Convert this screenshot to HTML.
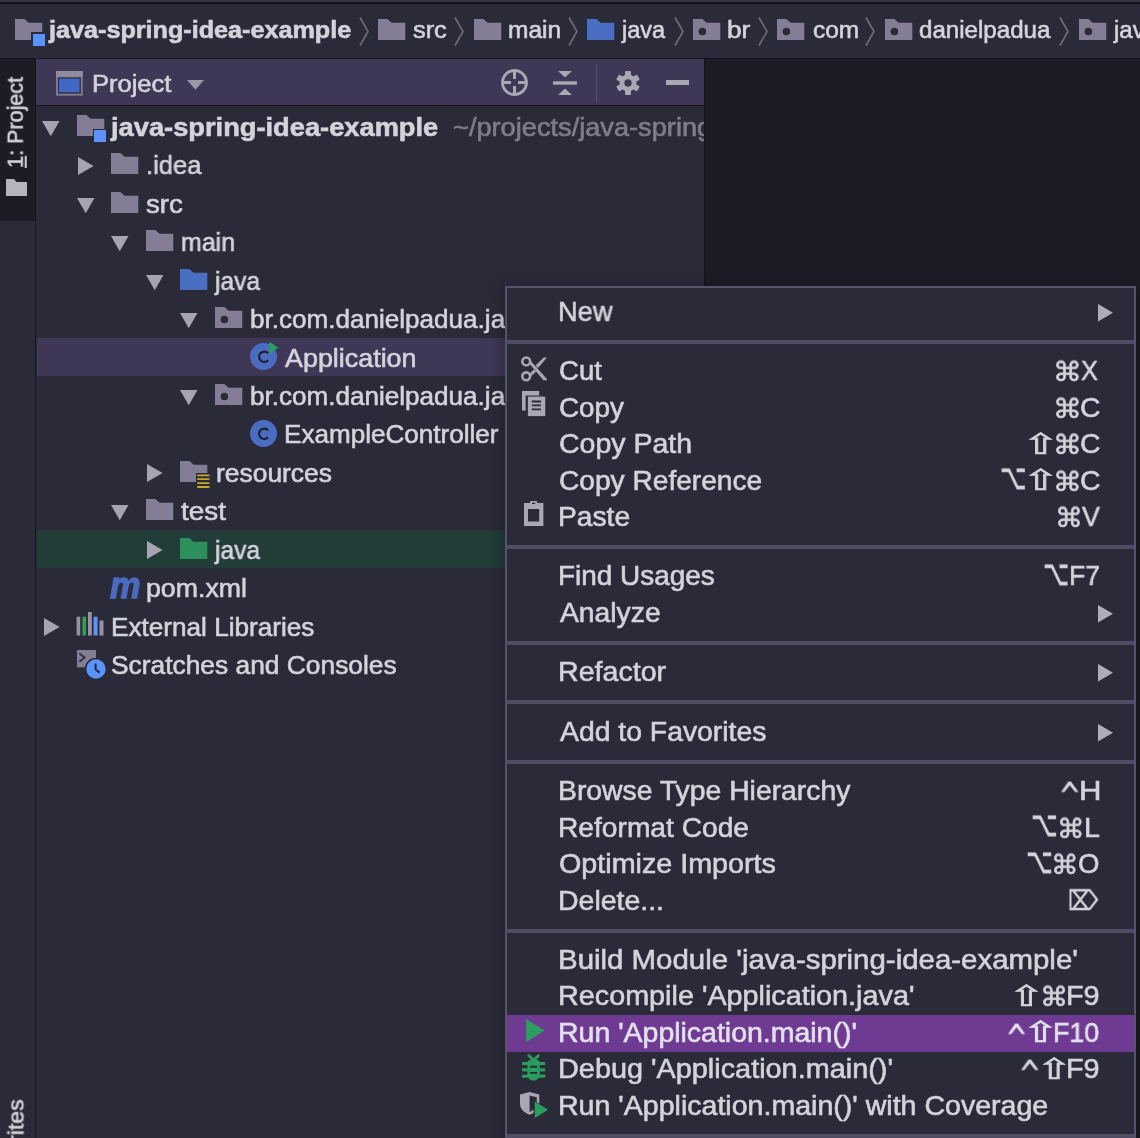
<!DOCTYPE html>
<html lang="en"><head><meta charset="utf-8"><title>IntelliJ IDEA - java-spring-idea-example</title>
<style>
*{margin:0;padding:0;box-sizing:border-box}
html,body{width:1140px;height:1138px;overflow:hidden;background:#2b2a39;}
body{position:relative;font-family:"Liberation Sans",sans-serif;font-size:26px;color:#d4d3dc;}
.a{position:absolute}
.t{position:absolute;white-space:nowrap;line-height:30px;height:30px;transform-origin:0 50%;-webkit-text-stroke:0.6px currentColor;will-change:transform}
.b{font-weight:bold}
.i{font-style:italic}
.m{-webkit-text-stroke:1.3px currentColor}
.k{font-family:"DejaVu Sans","Liberation Sans",sans-serif}
svg{position:absolute;overflow:visible}
#tree{position:absolute;left:37px;top:106px;width:667px;height:1032px;overflow:hidden}
#tree>*{margin-left:-37px;margin-top:-106px}
#crumbs{position:absolute;left:0;top:4px;width:1140px;height:54px;overflow:hidden}
#crumbs>*{margin-top:-4px}
</style></head>
<body>
<div class="a" style="left:0px;top:0px;width:1140px;height:2.3px;background:#363545;"></div>
<div class="a" style="left:0px;top:2.3px;width:1140px;height:1.5px;background:#14131a;"></div>
<div class="a" style="left:0px;top:57.5px;width:1140px;height:1.5px;background:#17161d;"></div>
<div id="crumbs">
<svg style="left:15px;top:19.3px" width="27.3" height="21.1" viewBox="0 0 27.3 21.1"><path d="M0 0H9.4L13.6 3.7H27.3V21.1H0Z" fill="#837e96"/></svg>
<div class="a" style="left:31px;top:32px;width:14px;height:14px;background:#2b2a39;"></div>
<div class="a" style="left:32.5px;top:33.5px;width:12px;height:12px;background:#5a93fb;"></div>
<div class="t b" style="left:49.39px;top:15.4px;transform:scaleX(1.0714);font-size:23.5px;">java-spring-idea-example</div>
<svg style="left:358.5px;top:17px" width="10" height="29" viewBox="0 0 10 29"><path d="M1 0.5L9 14.5L1 28.5" fill="none" stroke="#6f6c80" stroke-width="1.6"/></svg>
<svg style="left:378px;top:19.3px" width="27.3" height="21.1" viewBox="0 0 27.3 21.1"><path d="M0 0H9.4L13.6 3.7H27.3V21.1H0Z" fill="#837e96"/></svg>
<div class="t " style="left:412.6px;top:15.4px;transform:scaleX(1.0787);font-size:23.5px;">src</div>
<svg style="left:453.5px;top:17px" width="10" height="29" viewBox="0 0 10 29"><path d="M1 0.5L9 14.5L1 28.5" fill="none" stroke="#6f6c80" stroke-width="1.6"/></svg>
<svg style="left:474px;top:19.3px" width="27.3" height="21.1" viewBox="0 0 27.3 21.1"><path d="M0 0H9.4L13.6 3.7H27.3V21.1H0Z" fill="#837e96"/></svg>
<div class="t " style="left:507.97px;top:15.4px;transform:scaleX(1.0447);font-size:23.5px;">main</div>
<svg style="left:567.5px;top:17px" width="10" height="29" viewBox="0 0 10 29"><path d="M1 0.5L9 14.5L1 28.5" fill="none" stroke="#6f6c80" stroke-width="1.6"/></svg>
<svg style="left:587px;top:19.3px" width="27.3" height="21.1" viewBox="0 0 27.3 21.1"><path d="M0 0H9.4L13.6 3.7H27.3V21.1H0Z" fill="#4a6ec2"/></svg>
<div class="t " style="left:621.73px;top:15.4px;transform:scaleX(1.0001);font-size:23.5px;">java</div>
<svg style="left:673.5px;top:17px" width="10" height="29" viewBox="0 0 10 29"><path d="M1 0.5L9 14.5L1 28.5" fill="none" stroke="#6f6c80" stroke-width="1.6"/></svg>
<svg style="left:693px;top:19.3px" width="27.3" height="21.1" viewBox="0 0 27.3 21.1"><path d="M0 0H9.4L13.6 3.7H27.3V21.1H0Z" fill="#837e96"/><circle cx="9.4" cy="12.5" r="3.8" fill="#2b2a39"/></svg>
<div class="t " style="left:726.86px;top:15.4px;transform:scaleX(1.1133);font-size:23.5px;">br</div>
<svg style="left:757.5px;top:17px" width="10" height="29" viewBox="0 0 10 29"><path d="M1 0.5L9 14.5L1 28.5" fill="none" stroke="#6f6c80" stroke-width="1.6"/></svg>
<svg style="left:777px;top:19.3px" width="27.3" height="21.1" viewBox="0 0 27.3 21.1"><path d="M0 0H9.4L13.6 3.7H27.3V21.1H0Z" fill="#837e96"/><circle cx="9.4" cy="12.5" r="3.8" fill="#2b2a39"/></svg>
<div class="t " style="left:812.54px;top:15.4px;transform:scaleX(1.0414);font-size:23.5px;">com</div>
<svg style="left:864.5px;top:17px" width="10" height="29" viewBox="0 0 10 29"><path d="M1 0.5L9 14.5L1 28.5" fill="none" stroke="#6f6c80" stroke-width="1.6"/></svg>
<svg style="left:885px;top:19.3px" width="27.3" height="21.1" viewBox="0 0 27.3 21.1"><path d="M0 0H9.4L13.6 3.7H27.3V21.1H0Z" fill="#837e96"/><circle cx="9.4" cy="12.5" r="3.8" fill="#2b2a39"/></svg>
<div class="t " style="left:919.45px;top:15.4px;transform:scaleX(1.0260);font-size:23.5px;">danielpadua</div>
<svg style="left:1058.5px;top:17px" width="10" height="29" viewBox="0 0 10 29"><path d="M1 0.5L9 14.5L1 28.5" fill="none" stroke="#6f6c80" stroke-width="1.6"/></svg>
<svg style="left:1079px;top:19.3px" width="27.3" height="21.1" viewBox="0 0 27.3 21.1"><path d="M0 0H9.4L13.6 3.7H27.3V21.1H0Z" fill="#837e96"/><circle cx="9.4" cy="12.5" r="3.8" fill="#2b2a39"/></svg>
<div class="t " style="left:1114.25px;top:15.4px;transform:scaleX(1.0229);font-size:23.5px;">java</div>
</div>
<div class="a" style="left:0px;top:59px;width:36px;height:161.5px;background:#1d1c26;"></div>
<div class="a" style="left:0px;top:220.5px;width:36px;height:920px;background:#2b2a39;"></div>
<div class="a" style="left:35.2px;top:59px;width:1.2px;height:1080px;background:#17161d;"></div>
<div class="a" style="left:23.6px;top:166.7px;width:0;height:0"><div class="t" style="left:-1.35px;top:-22.62px;transform-origin:1.35px 22.62px;transform:rotate(-90deg) scaleX(0.9800);font-size:22px"><u>1</u>: Project</div></div>
<div class="a" style="left:23.6px;top:1219px;width:0;height:0"><div class="t" style="left:-1.08px;top:-22.62px;transform-origin:1.08px 22.62px;transform:rotate(-90deg) scaleX(1.0476);font-size:22px">2: Favorites</div></div>
<svg style="left:6px;top:179px" width="21" height="17" viewBox="0 0 21 17"><path d="M0 0H8L10.5 3H21V17H0Z" fill="#b5b3bd"/></svg>
<div class="a" style="left:705px;top:59px;width:435px;height:1080px;background:#1d1c26;"></div>
<div class="a" style="left:704px;top:59px;width:1.5px;height:1080px;background:#17161d;"></div>
<div class="a" style="left:36.3px;top:59px;width:667.7px;height:46.2px;background:#3e3755;"></div>
<div class="a" style="left:36.3px;top:105.2px;width:667.7px;height:1.1px;background:#17161d;"></div>
<svg style="left:55.8px;top:71px" width="26.8" height="24.7" viewBox="0 0 26.8 24.7"><rect x="0" y="0" width="26.8" height="24.7" fill="#7d7a8e"/><rect x="0" y="0" width="26.8" height="5.8" fill="#8f8c9e"/><rect x="2" y="6.4" width="22.8" height="16.2" fill="#2c2a3a"/><rect x="3" y="7.6" width="20.6" height="13.7" fill="#4168c4"/></svg>
<div class="t " style="left:91.51px;top:69px;transform:scaleX(1.0857);font-size:23.5px;">Project</div>
<svg style="left:187.2px;top:80px" width="17" height="9.8" viewBox="0 0 17 9.8"><path d="M0 0H17L8.5 9.8Z" fill="#9a97a6"/></svg>
<svg style="left:501px;top:69px" width="27" height="27" viewBox="0 0 27 27"><circle cx="13.5" cy="13.5" r="12" fill="none" stroke="#aaa8b4" stroke-width="2.8"/><path d="M13.5 1V10M13.5 17V26M1 13.5H10M17 13.5H26" stroke="#aaa8b4" stroke-width="3"/></svg>
<svg style="left:552.5px;top:70.5px" width="24" height="24" viewBox="0 0 24 24"><path d="M0 12H24" stroke="#aaa8b4" stroke-width="3.4"/><path d="M5 0H19L12 6.5Z M5 24H19L12 17.5Z" fill="#aaa8b4"/></svg>
<div class="a" style="left:595.5px;top:63.5px;width:1.5px;height:38px;background:#57536a;"></div>
<svg style="left:614.5px;top:69.5px" width="26" height="26" viewBox="0 0 26 26"><g transform="translate(13 13) scale(0.92)" fill="#aaa8b4"><rect x="-3.2" y="-13" width="6.4" height="7" rx="1" transform="rotate(0)"/><rect x="-3.2" y="-13" width="6.4" height="7" rx="1" transform="rotate(60)"/><rect x="-3.2" y="-13" width="6.4" height="7" rx="1" transform="rotate(120)"/><rect x="-3.2" y="-13" width="6.4" height="7" rx="1" transform="rotate(180)"/><rect x="-3.2" y="-13" width="6.4" height="7" rx="1" transform="rotate(240)"/><rect x="-3.2" y="-13" width="6.4" height="7" rx="1" transform="rotate(300)"/><circle r="9.2"/><circle r="4" fill="#3e3755"/></g></svg>
<div class="a" style="left:665.8px;top:80.3px;width:23.3px;height:4.3px;background:#aaa8b4;"></div>
<div id="tree">
<div class="a" style="left:37px;top:337.90000000000003px;width:469px;height:37.8px;background:#3e3756;"></div>
<div class="a" style="left:37px;top:530.0px;width:469px;height:37.8px;background:#223c38;"></div>
<svg style="left:42.3px;top:120.8px" width="17.5" height="15.2" viewBox="0 0 17.5 15.2"><path d="M0 0H17.5L8.75 15.2Z" fill="#a6a4b0"/></svg>
<svg style="left:76.8px;top:114.9px" width="27.3" height="21.1" viewBox="0 0 27.3 21.1"><path d="M0 0H9.4L13.6 3.7H27.3V21.1H0Z" fill="#837e96"/></svg>
<div class="a" style="left:92.8px;top:128.8px;width:14.5px;height:14.5px;background:#2b2a39;"></div>
<div class="a" style="left:94.3px;top:130.3px;width:12px;height:11.6px;background:#5a93fb;"></div>
<div class="t b" style="left:111.43px;top:112px;transform:scaleX(1.0485);">java-spring-idea-example</div>
<div class="t " style="left:452.65px;top:112px;transform:scaleX(1.0457);color:#7f7d8c;">~/projects/java-spring-idea-example</div>
<svg style="left:78.3px;top:156.6px" width="15.6" height="18" viewBox="0 0 15.6 18"><path d="M0 0L15.6 9L0 18Z" fill="#a6a4b0"/></svg>
<svg style="left:111.3px;top:153.3px" width="27.3" height="21.1" viewBox="0 0 27.3 21.1"><path d="M0 0H9.4L13.6 3.7H27.3V21.1H0Z" fill="#837e96"/></svg>
<div class="t " style="left:146.01px;top:150.4px;transform:scaleX(0.9814);">.idea</div>
<svg style="left:76.8px;top:197.7px" width="17.5" height="15.2" viewBox="0 0 17.5 15.2"><path d="M0 0H17.5L8.75 15.2Z" fill="#a6a4b0"/></svg>
<svg style="left:111.3px;top:191.8px" width="27.3" height="21.1" viewBox="0 0 27.3 21.1"><path d="M0 0H9.4L13.6 3.7H27.3V21.1H0Z" fill="#837e96"/></svg>
<div class="t " style="left:145.87px;top:188.9px;transform:scaleX(1.0637);">src</div>
<svg style="left:111.3px;top:236.1px" width="17.5" height="15.2" viewBox="0 0 17.5 15.2"><path d="M0 0H17.5L8.75 15.2Z" fill="#a6a4b0"/></svg>
<svg style="left:145.8px;top:230.2px" width="27.3" height="21.1" viewBox="0 0 27.3 21.1"><path d="M0 0H9.4L13.6 3.7H27.3V21.1H0Z" fill="#837e96"/></svg>
<div class="t " style="left:181.14px;top:227.3px;transform:scaleX(0.9593);">main</div>
<svg style="left:145.8px;top:274.5px" width="17.5" height="15.2" viewBox="0 0 17.5 15.2"><path d="M0 0H17.5L8.75 15.2Z" fill="#a6a4b0"/></svg>
<svg style="left:180.3px;top:268.6px" width="27.3" height="21.1" viewBox="0 0 27.3 21.1"><path d="M0 0H9.4L13.6 3.7H27.3V21.1H0Z" fill="#4a6ec2"/></svg>
<div class="t " style="left:215.27px;top:265.7px;transform:scaleX(0.9451);">java</div>
<svg style="left:180.3px;top:313px" width="17.5" height="15.2" viewBox="0 0 17.5 15.2"><path d="M0 0H17.5L8.75 15.2Z" fill="#a6a4b0"/></svg>
<svg style="left:214.8px;top:307.1px" width="27.3" height="21.1" viewBox="0 0 27.3 21.1"><path d="M0 0H9.4L13.6 3.7H27.3V21.1H0Z" fill="#837e96"/><circle cx="9.4" cy="12.5" r="3.8" fill="#2b2a39"/></svg>
<div class="t " style="left:249.97px;top:304.2px;transform:scaleX(1.0030);">br.com.danielpadua.java.spring.idea.example</div>
<svg style="left:249.6px;top:343.3px" width="27" height="27" viewBox="0 0 27 27"><circle cx="13.5" cy="13.5" r="13.5" fill="#4a6dc2"/><path d="M18.1 10.3A5.2 5.2 0 1 0 18.1 17.3" fill="none" stroke="#1f1e2a" stroke-width="2.1"/><path d="M19.3 -1.3L28.4 4.7L19.3 10.7Z" fill="#27a05f"/></svg>
<div class="t " style="left:285px;top:342.6px;transform:scaleX(1.0339);">Application</div>
<svg style="left:180.3px;top:389.8px" width="17.5" height="15.2" viewBox="0 0 17.5 15.2"><path d="M0 0H17.5L8.75 15.2Z" fill="#a6a4b0"/></svg>
<svg style="left:214.8px;top:383.9px" width="27.3" height="21.1" viewBox="0 0 27.3 21.1"><path d="M0 0H9.4L13.6 3.7H27.3V21.1H0Z" fill="#837e96"/><circle cx="9.4" cy="12.5" r="3.8" fill="#2b2a39"/></svg>
<div class="t " style="left:249.97px;top:381px;transform:scaleX(1.0030);">br.com.danielpadua.java.spring.idea.example</div>
<svg style="left:249.6px;top:420.1px" width="27" height="27" viewBox="0 0 27 27"><circle cx="13.5" cy="13.5" r="13.5" fill="#4a6dc2"/><path d="M18.1 10.3A5.2 5.2 0 1 0 18.1 17.3" fill="none" stroke="#1f1e2a" stroke-width="2.1"/></svg>
<div class="t " style="left:284.16px;top:419.4px;transform:scaleX(1.0028);">ExampleController</div>
<svg style="left:147.3px;top:464.1px" width="15.6" height="18" viewBox="0 0 15.6 18"><path d="M0 0L15.6 9L0 18Z" fill="#a6a4b0"/></svg>
<svg style="left:180.3px;top:460.8px" width="27.3" height="21.1" viewBox="0 0 27.3 21.1"><path d="M0 0H9.4L13.6 3.7H27.3V21.1H0Z" fill="#837e96"/></svg>
<svg style="left:196px;top:472.5px" width="14" height="16" viewBox="0 0 14 16"><rect x="0" y="0" width="14" height="16" fill="#2b2a39"/><path d="M1.2 2.4H13.4M1.2 6.2H13.4M1.2 10.2H13.4M1.2 14H13.4" stroke="#c4a62f" stroke-width="1.8"/></svg>
<div class="t " style="left:215.85px;top:457.9px;transform:scaleX(1.0159);">resources</div>
<svg style="left:111.3px;top:505.1px" width="17.5" height="15.2" viewBox="0 0 17.5 15.2"><path d="M0 0H17.5L8.75 15.2Z" fill="#a6a4b0"/></svg>
<svg style="left:145.8px;top:499.2px" width="27.3" height="21.1" viewBox="0 0 27.3 21.1"><path d="M0 0H9.4L13.6 3.7H27.3V21.1H0Z" fill="#837e96"/></svg>
<div class="t " style="left:181px;top:496.3px;transform:scaleX(1.0715);">test</div>
<svg style="left:147.3px;top:540.9px" width="15.6" height="18" viewBox="0 0 15.6 18"><path d="M0 0L15.6 9L0 18Z" fill="#a6a4b0"/></svg>
<svg style="left:180.3px;top:537.6px" width="27.3" height="21.1" viewBox="0 0 27.3 21.1"><path d="M0 0H9.4L13.6 3.7H27.3V21.1H0Z" fill="#2b905b"/></svg>
<div class="t " style="left:215.27px;top:534.7px;transform:scaleX(0.9451);">java</div>
<div class="t b i m" style="left:109.76px;top:570.6px;transform:scaleX(0.9514);color:#4a6cc0;font-size:36px;">m</div>
<div class="t " style="left:145.83px;top:573.2px;transform:scaleX(1.0274);">pom.xml</div>
<svg style="left:43.8px;top:617.8px" width="15.6" height="18" viewBox="0 0 15.6 18"><path d="M0 0L15.6 9L0 18Z" fill="#a6a4b0"/></svg>
<svg style="left:76.3px;top:612px" width="28" height="24" viewBox="0 0 28 24"><rect x="0.6" y="4.7" width="3.6" height="18.8" fill="#9693a4"/><rect x="6.4" y="4.7" width="3.7" height="18.8" fill="#2f9e5c"/><rect x="12" y="0" width="3.8" height="23.5" fill="#9693a4"/><rect x="17.6" y="4.7" width="4" height="18.8" fill="#5a93fb"/><rect x="23.5" y="8.5" width="4" height="15" fill="#9693a4"/></svg>
<div class="t " style="left:111.46px;top:611.6px;transform:scaleX(1.0052);">External Libraries</div>
<svg style="left:76.9px;top:650.4px" width="30" height="30" viewBox="0 0 30 30"><rect x="0" y="0" width="19" height="17.3" fill="#837e96"/><path d="M2.4 3.4L7.6 7.6L2.4 11.8" stroke="#2b2a39" stroke-width="1.8" fill="none"/><circle cx="19" cy="19" r="11.2" fill="#2b2a39"/><circle cx="19" cy="19" r="9.7" fill="#5a93fb"/><path d="M18.6 13.5V19.6L22.6 22.6" stroke="#2b2a39" stroke-width="2" fill="none"/></svg>
<div class="t " style="left:111.18px;top:650px;transform:scaleX(1.0136);">Scratches and Consoles</div>
</div>
<div class="a" style="left:505px;top:286px;width:631px;height:870px;background:#2b2a39;border:2px solid #57536c;box-shadow:0 3px 14px 2px rgba(0,0,0,0.28)"></div>
<div class="a" style="left:507px;top:339.7px;width:627px;height:4px;background:#514d65;"></div>
<div class="a" style="left:507px;top:544.8px;width:627px;height:4px;background:#514d65;"></div>
<div class="a" style="left:507px;top:640.8px;width:627px;height:4px;background:#514d65;"></div>
<div class="a" style="left:507px;top:700.3px;width:627px;height:4px;background:#514d65;"></div>
<div class="a" style="left:507px;top:759.8px;width:627px;height:4px;background:#514d65;"></div>
<div class="a" style="left:507px;top:928.5px;width:627px;height:4px;background:#514d65;"></div>
<div class="a" style="left:507px;top:1133.5px;width:627px;height:4px;background:#514d65;"></div>
<div class="t " style="left:558.17px;top:296.8px;transform:scaleX(0.9906);font-size:27.5px;">New</div>
<svg style="left:1097.8px;top:303.55px" width="15" height="17.4" viewBox="0 0 15 17.4"><path d="M0 0L15 8.7L0 17.4Z" fill="#aeacb9"/></svg>
<div class="t " style="left:559.01px;top:356.3px;transform:scaleX(1.0024);font-size:27.5px;">Cut</div>
<div class="t k" style="left:1052.54px;top:356.33px;transform-origin:0 24.51px;transform:scale(1.0519,0.9784);font-size:27.5px;">⌘</div>
<div class="t " style="left:1081.2px;top:356.3px;transform:scaleX(0.9196);font-size:27.5px;">X</div>
<div class="t " style="left:558.99px;top:392.7px;transform:scaleX(1.0126);font-size:27.5px;">Copy</div>
<div class="t k" style="left:1052.54px;top:392.73px;transform-origin:0 24.51px;transform:scale(1.0519,0.9784);font-size:27.5px;">⌘</div>
<div class="t " style="left:1079.57px;top:392.7px;transform:scaleX(1.0331);font-size:27.5px;">C</div>
<div class="t " style="left:558.96px;top:429.1px;transform:scaleX(1.0368);font-size:27.5px;">Copy Path</div>
<div class="t k" style="left:1021.93px;top:428.53px;transform-origin:0 24.51px;transform:scale(1.6220,1.0449);font-size:27.5px;">⇧</div>
<div class="t k" style="left:1052.54px;top:429.13px;transform-origin:0 24.51px;transform:scale(1.0519,0.9784);font-size:27.5px;">⌘</div>
<div class="t " style="left:1079.57px;top:429.1px;transform:scaleX(1.0331);font-size:27.5px;">C</div>
<div class="t " style="left:558.98px;top:465.5px;transform:scaleX(1.0223);font-size:27.5px;">Copy Reference</div>
<div class="t k" style="left:1000.38px;top:464.13px;transform-origin:0 24.51px;transform:scale(0.8271,1.2769);font-size:27.5px;">⌥</div>
<div class="t k" style="left:1021.93px;top:464.93px;transform-origin:0 24.51px;transform:scale(1.6220,1.0449);font-size:27.5px;">⇧</div>
<div class="t k" style="left:1052.54px;top:465.53px;transform-origin:0 24.51px;transform:scale(1.0519,0.9784);font-size:27.5px;">⌘</div>
<div class="t " style="left:1079.57px;top:465.5px;transform:scaleX(1.0331);font-size:27.5px;">C</div>
<div class="t " style="left:558.1px;top:501.9px;transform:scaleX(1.0245);font-size:27.5px;">Paste</div>
<div class="t k" style="left:1054.83px;top:501.93px;transform-origin:0 24.51px;transform:scale(1.0193,0.9784);font-size:27.5px;">⌘</div>
<div class="t " style="left:1082px;top:501.9px;transform:scaleX(0.9742);font-size:27.5px;">V</div>
<div class="t " style="left:558.12px;top:561.4px;transform:scaleX(1.0154);font-size:27.5px;">Find Usages</div>
<div class="t k" style="left:1042.79px;top:560.03px;transform-origin:0 24.51px;transform:scale(0.8199,1.2769);font-size:27.5px;">⌥</div>
<div class="t " style="left:1068.92px;top:561.4px;transform:scaleX(0.9678);font-size:27.5px;">F7</div>
<div class="t " style="left:559.5px;top:597.8px;transform:scaleX(1.0287);font-size:27.5px;">Analyze</div>
<svg style="left:1097.8px;top:604.55px" width="15" height="17.4" viewBox="0 0 15 17.4"><path d="M0 0L15 8.7L0 17.4Z" fill="#aeacb9"/></svg>
<div class="t " style="left:558.07px;top:657.3px;transform:scaleX(1.0399);font-size:27.5px;">Refactor</div>
<svg style="left:1097.8px;top:664.05px" width="15" height="17.4" viewBox="0 0 15 17.4"><path d="M0 0L15 8.7L0 17.4Z" fill="#aeacb9"/></svg>
<div class="t " style="left:559.5px;top:716.8px;transform:scaleX(1.0307);font-size:27.5px;">Add to Favorites</div>
<svg style="left:1097.8px;top:723.55px" width="15" height="17.4" viewBox="0 0 15 17.4"><path d="M0 0L15 8.7L0 17.4Z" fill="#aeacb9"/></svg>
<div class="t " style="left:558.09px;top:776.3px;transform:scaleX(1.0304);font-size:27.5px;">Browse Type Hierarchy</div>
<div class="t k" style="left:1059.3px;top:782.05px;transform-origin:0 24.51px;transform:scale(0.9309,1.2929);font-size:27.5px;">^</div>
<div class="t " style="left:1079.07px;top:776.3px;transform:scaleX(1.1313);font-size:27.5px;">H</div>
<div class="t " style="left:558.1px;top:812.7px;transform:scaleX(1.0245);font-size:27.5px;">Reformat Code</div>
<div class="t k" style="left:1030.86px;top:811.33px;transform-origin:0 24.51px;transform:scale(0.8378,1.2769);font-size:27.5px;">⌥</div>
<div class="t k" style="left:1056.88px;top:812.73px;transform-origin:0 24.51px;transform:scale(1.0054,0.9784);font-size:27.5px;">⌘</div>
<div class="t " style="left:1083.76px;top:812.7px;transform:scaleX(1.0433);font-size:27.5px;">L</div>
<div class="t " style="left:558.95px;top:849.1px;transform:scaleX(1.0439);font-size:27.5px;">Optimize Imports</div>
<div class="t k" style="left:1025.55px;top:847.73px;transform-origin:0 24.51px;transform:scale(0.8414,1.2769);font-size:27.5px;">⌥</div>
<div class="t k" style="left:1051.28px;top:849.13px;transform-origin:0 24.51px;transform:scale(1.0054,0.9784);font-size:27.5px;">⌘</div>
<div class="t " style="left:1078.33px;top:849.1px;transform:scaleX(0.9838);font-size:27.5px;">O</div>
<div class="t " style="left:558.08px;top:885.5px;transform:scaleX(1.0350);font-size:27.5px;">Delete...</div>
<div class="t k" style="left:1067.57px;top:885.33px;transform-origin:0 24.51px;transform:scale(0.7758,0.9879);font-size:27.5px;">⌦</div>
<div class="t " style="left:558px;top:945px;transform:scaleX(1.0700);font-size:27.5px;">Build Module 'java-spring-idea-example'</div>
<div class="t " style="left:558.05px;top:981.4px;transform:scaleX(1.0461);font-size:27.5px;">Recompile 'Application.java'</div>
<div class="t k" style="left:1008.42px;top:980.83px;transform-origin:0 24.51px;transform:scale(1.6009,1.0449);font-size:27.5px;">⇧</div>
<div class="t k" style="left:1039.51px;top:981.43px;transform-origin:0 24.51px;transform:scale(1.0287,0.9784);font-size:27.5px;">⌘</div>
<div class="t " style="left:1066.45px;top:981.4px;transform:scaleX(1.0475);font-size:27.5px;">F9</div>
<div class="a" style="left:507px;top:1015.1499999999999px;width:627px;height:36.8px;background:#6e3a92;"></div>
<div class="t " style="left:558.08px;top:1017.8px;transform:scaleX(1.0352);color:#e2e1ea;font-size:27.5px;">Run 'Application.main()'</div>
<div class="t k" style="left:1006.04px;top:1023.55px;transform-origin:0 24.51px;transform:scale(0.9139,1.2929);font-size:27.5px;color:#e2e1ea;">^</div>
<div class="t k" style="left:1021.99px;top:1017.23px;transform-origin:0 24.51px;transform:scale(1.6079,1.0449);font-size:27.5px;color:#e2e1ea;">⇧</div>
<div class="t " style="left:1052.9px;top:1017.8px;transform:scaleX(0.9764);color:#e2e1ea;font-size:27.5px;">F10</div>
<div class="t " style="left:558.05px;top:1054.2px;transform:scaleX(1.0490);font-size:27.5px;">Debug 'Application.main()'</div>
<div class="t k" style="left:1019.29px;top:1059.95px;transform-origin:0 24.51px;transform:scale(0.9366,1.2929);font-size:27.5px;">^</div>
<div class="t k" style="left:1035.81px;top:1053.63px;transform-origin:0 24.51px;transform:scale(1.5797,1.0449);font-size:27.5px;">⇧</div>
<div class="t " style="left:1066.45px;top:1054.2px;transform:scaleX(1.0475);font-size:27.5px;">F9</div>
<div class="t " style="left:558.07px;top:1090.6px;transform:scaleX(1.0383);font-size:27.5px;">Run 'Application.main()' with Coverage</div>
<svg style="left:520.9px;top:355.6px" width="26" height="25.7" viewBox="0 0 26 25.7"><g fill="none" stroke="#a9a7b4" stroke-width="2.6"><circle cx="5.2" cy="5.4" r="3.9"/><circle cx="5.2" cy="20.3" r="3.9"/></g><path d="M8 7.2L10.2 5.6L26 23L26 24.3L22.5 24.3Z" fill="#a9a7b4"/><path d="M8.2 18.4L12.6 13.4L15.2 15.4L10.4 20Z" fill="#a9a7b4"/><path d="M14.6 9.4L22.6 1.4L26 1.4L17 12Z" fill="#a9a7b4"/></svg>
<svg style="left:522px;top:391.1px" width="23.4" height="25.2" viewBox="0 0 23.4 25.2"><path d="M0 0H17.2V4.4H3.6V19.4H0Z" fill="#a9a7b4"/><rect x="5.9" y="5.6" width="17.4" height="19.5" fill="#a9a7b4"/><path d="M9.8 10.5H19M9.8 14.4H19M9.8 18.3H19" stroke="#2b2a39" stroke-width="1.8"/></svg>
<svg style="left:523.9px;top:501px" width="19.4" height="25" viewBox="0 0 19.4 25"><path d="M0 2H19.4V25H0Z M4 8V20.6H15.2V8Z" fill="#a9a7b4" fill-rule="evenodd"/><rect x="6" y="0" width="7.2" height="4.4" rx="1" fill="#a9a7b4"/><rect x="8" y="1.6" width="3.2" height="1.4" fill="#2b2a39"/></svg>
<svg style="left:525.8px;top:1019px" width="19" height="23.2" viewBox="0 0 19 23.2"><path d="M0 0L18.8 11.6L0 23.2Z" fill="#2a9d5f"/></svg>
<svg style="left:521.9px;top:1053.8px" width="23.2" height="26.8" viewBox="0 0 23.2 26.8"><g fill="#2a9d5f"><path d="M5.4 9.5C5.4 6.5 8 5 11.6 5C15.2 5 17.8 6.5 17.8 9.5V20C17.8 24 15 26.6 11.6 26.6C8.2 26.6 5.4 24 5.4 20Z"/><rect x="0" y="8" width="23.2" height="3.1"/><rect x="0" y="14.3" width="23.2" height="3.1"/><rect x="0" y="20.6" width="23.2" height="3.1"/><path d="M5 1.8L7 0L11.6 4.2L16.2 0L18.2 1.8L12.8 7H10.4Z"/></g><path d="M8 12.7H15.2M8 18.9H15.2" stroke="#2b2a39" stroke-width="1.9"/></svg>
<svg style="left:520px;top:1092.3px" width="28.4" height="26.2" viewBox="0 0 28.4 26.2"><path d="M0 2.4L9.6 0L19.3 2.4V11.5C19.3 17.5 14.5 21 9.6 22.7C4.8 21 0 17.5 0 11.5Z" fill="#a9a7b4"/><path d="M9.6 3.4L16.8 5.2V11.5C16.8 15.6 13.6 18.4 9.6 20Z" fill="#2b2a39"/><path d="M13.6 8L28.4 17.5L13.6 27Z" fill="#2b2a39"/><path d="M14.8 9.5L28.2 17.8L14.8 26.1Z" fill="#2a9d5f"/></svg>
</body></html>
